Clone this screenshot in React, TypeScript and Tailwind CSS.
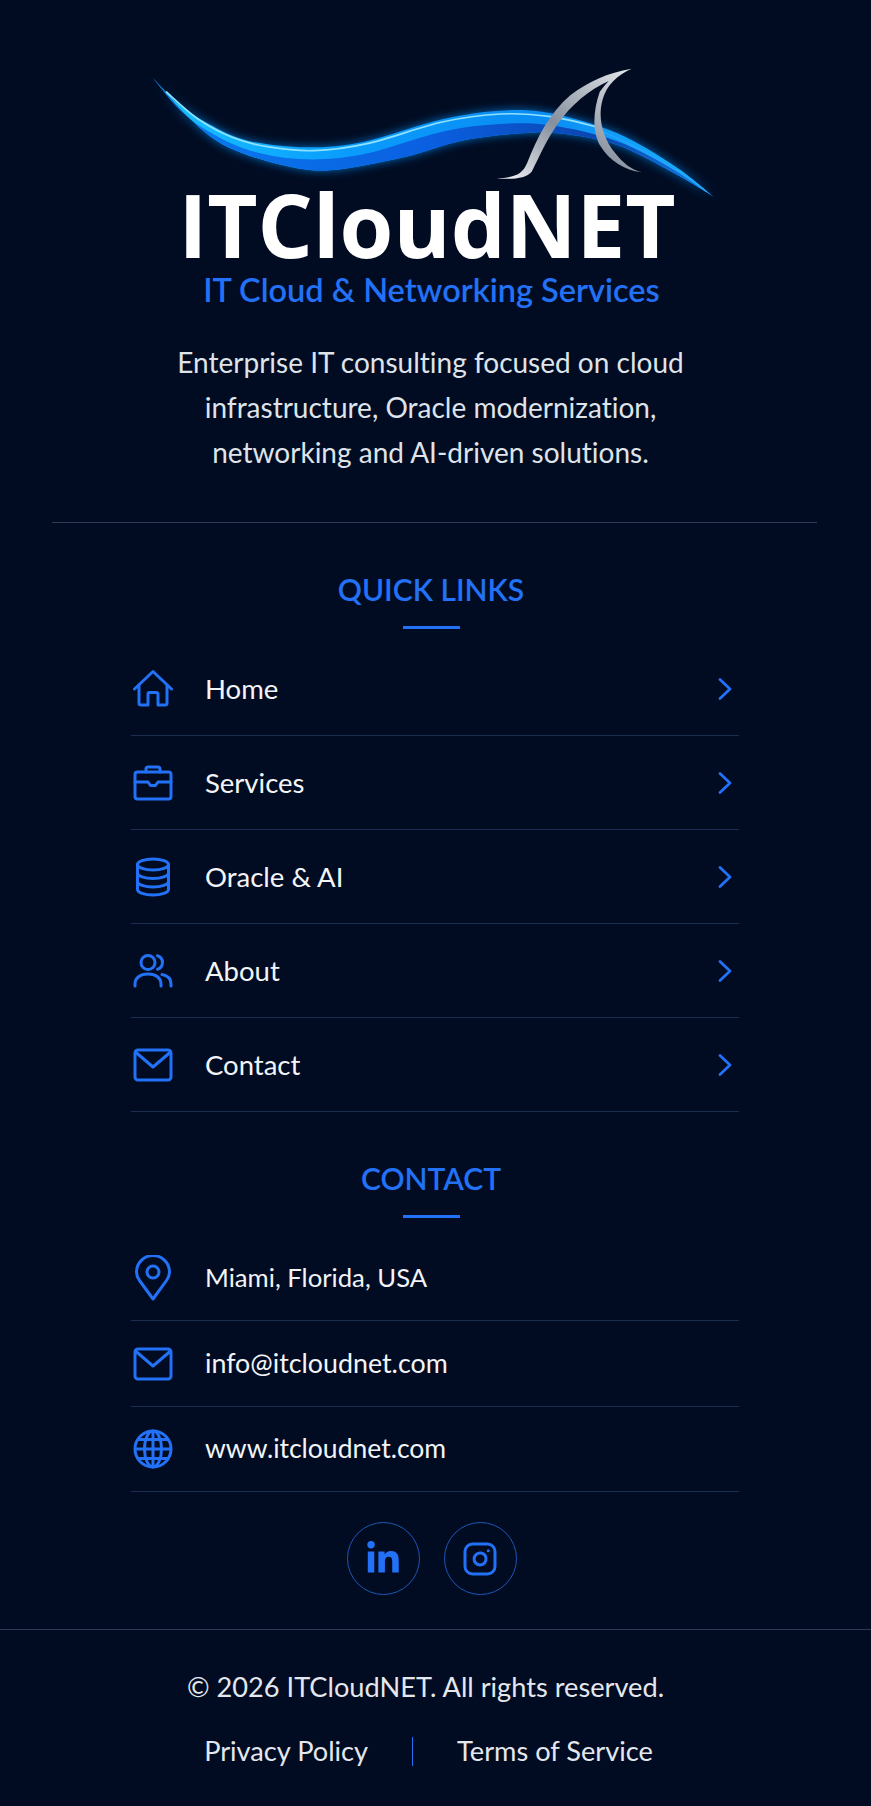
import { Instagram } from 'lucide-react'
import { FaLinkedinIn } from 'react-icons/fa'
import type { ReactNode } from 'react'

const SANS = "font-['Lato','Noto_Sans',sans-serif] [font-variant-ligatures:none]"

// turn a list of points into a smooth path segment (catmull-rom)
function smooth(pts: number[][]) {
  let d = ''
  for (let i = 0; i < pts.length - 1; i++) {
    const p0 = pts[Math.max(i - 1, 0)]
    const p1 = pts[i]
    const p2 = pts[i + 1]
    const p3 = pts[Math.min(i + 2, pts.length - 1)]
    const c1 = [p1[0] + (p2[0] - p0[0]) / 6, p1[1] + (p2[1] - p0[1]) / 6]
    const c2 = [p2[0] - (p3[0] - p1[0]) / 6, p2[1] - (p3[1] - p1[1]) / 6]
    d += `C${c1[0]} ${c1[1]} ${c2[0]} ${c2[1]} ${p2[0]} ${p2[1]}`
  }
  return d
}

const waveTop = [[52, 78], [120, 160], [200, 222], [300, 272], [450, 292], [600, 275], [800, 208], [950, 182], [1080, 190], [1250, 250], [1400, 350], [1498, 440]]
const waveMid = [[52, 78], [130, 185], [220, 258], [320, 306], [450, 328], [600, 312], [800, 245], [950, 222], [1080, 226], [1250, 274], [1400, 362], [1498, 440]]
const waveBottom = [[1498, 440], [1400, 372], [1250, 285], [1100, 250], [1000, 250], [850, 272], [700, 322], [520, 360], [400, 348], [250, 292], [150, 205], [52, 78]]
const waveLine = [[90, 125], [170, 205], [260, 262], [350, 290], [470, 302], [610, 280], [800, 216], [950, 192], [1080, 200], [1200, 232]]
const wavePath = `M52 78${smooth(waveTop)}${smooth(waveBottom)}Z`
const waveLower = `M52 78${smooth(waveMid)}${smooth(waveBottom)}Z`

function HomeIcon() {
  return (
    <svg width="40" height="40" viewBox="0 0 40 40" fill="none" stroke="currentColor" strokeWidth="3" strokeLinecap="round" strokeLinejoin="round">
      <path d="M1.500 20 20 2.500 38.500 20" />
      <path d="M6 16v18a2 2 0 0 0 2 2h7V25a1.500 1.500 0 0 1 1.500-1.500h7A1.500 1.500 0 0 1 25 25v11h7a2 2 0 0 0 2-2V16" />
    </svg>
  )
}

function BriefcaseIcon() {
  return (
    <svg width="40" height="40" viewBox="0 0 40 40" fill="none" stroke="currentColor" strokeWidth="3" strokeLinecap="round" strokeLinejoin="round">
      <rect x="2" y="9" width="36" height="27" rx="2.500" />
      <path d="M13 9V6a2 2 0 0 1 2-2h10a2 2 0 0 1 2 2v3" />
      <path d="M2 19h13l2.500 3.500h5l2.500-3.500h13" />
    </svg>
  )
}

function DatabaseIcon() {
  return (
    <svg width="40" height="40" viewBox="0 0 40 40" fill="none" stroke="currentColor" strokeWidth="3" strokeLinecap="round" strokeLinejoin="round">
      <ellipse cx="20" cy="7.500" rx="15.500" ry="5.500" />
      <path d="M4.500 7.500v25c0 3 7 5.500 15.500 5.500s15.500-2.500 15.500-5.500v-25" />
      <path d="M4.500 16c0 3 7 5.500 15.500 5.500S35.500 19 35.500 16" />
      <path d="M4.500 24.500c0 3 7 5.500 15.500 5.500s15.500-2.500 15.500-5.500" />
    </svg>
  )
}

function UsersIcon() {
  return (
    <svg width="40" height="40" viewBox="0 0 40 40" fill="none" stroke="currentColor" strokeWidth="3" strokeLinecap="round" strokeLinejoin="round">
      <circle cx="15" cy="11.500" r="7" />
      <path d="M2 35v-2c0-6 5-10 13-10s13 4 13 10v2" />
      <path d="M24.500 4.800a7 7 0 0 1 0 13.400" />
      <path d="M29 23.500c5.500 1 9 4.500 9 9.500v2" />
    </svg>
  )
}

function MailIcon() {
  return (
    <svg width="40" height="40" viewBox="0 0 40 40" fill="none" stroke="currentColor" strokeWidth="3" strokeLinecap="round" strokeLinejoin="round">
      <rect x="2" y="5" width="36" height="30" rx="3" />
      <path d="M3 7.500 20 22 37 7.500" />
    </svg>
  )
}

function PinIcon() {
  return (
    <svg width="40" height="46" viewBox="0 0 40 46" fill="none" stroke="currentColor" strokeWidth="3" strokeLinejoin="round">
      <path d="M20 44 6.500 25.500C4 22 3.500 19.500 3.500 17a16.500 16.500 0 0 1 33 0c0 2.500-.5 5-3 8.500Z" />
      <circle cx="20" cy="17" r="6" />
    </svg>
  )
}

function GlobeIcon() {
  return (
    <svg width="40" height="40" viewBox="0 0 40 40" fill="none" stroke="currentColor" strokeWidth="3">
      <circle cx="20" cy="20" r="18" />
      <ellipse cx="20" cy="20" rx="8.500" ry="18" />
      <path d="M20 2v36M2 20h36M5 10.500h30M5 29.500h30" />
    </svg>
  )
}

function Chevron() {
  return (
    <svg width="20" height="26" viewBox="0 0 20 26" fill="none" stroke="currentColor" strokeWidth="2.800" strokeLinecap="round" strokeLinejoin="round">
      <path d="M5 3.500 15 13 5 22.500" />
    </svg>
  )
}

function Logo() {
  return (
    <svg className="block mx-auto" width="610" height="150" viewBox="0 0 1568 450" preserveAspectRatio="none">
      <defs>
        <linearGradient id="wave" x1="0" y1="0" x2="1" y2="0">
          <stop offset="0" stopColor="#19c4ff" />
          <stop offset="0.35" stopColor="#0a9cfc" />
          <stop offset="0.7" stopColor="#0a8cf2" />
          <stop offset="1" stopColor="#1ab4ff" />
        </linearGradient>
        <linearGradient id="waveLow" x1="0" y1="0" x2="1" y2="0">
          <stop offset="0" stopColor="#0a7cf0" />
          <stop offset="0.5" stopColor="#0a5fe0" />
          <stop offset="0.8" stopColor="#0b45b0" />
          <stop offset="1" stopColor="#0f80ea" />
        </linearGradient>
        <linearGradient id="fin" x1="0" y1="1" x2="1" y2="0">
          <stop offset="0" stopColor="#f4f5f8" />
          <stop offset="0.45" stopColor="#868f9d" />
          <stop offset="1" stopColor="#eceef2" />
        </linearGradient>
        <filter id="glow" x="-10%" y="-40%" width="120%" height="180%">
          <feGaussianBlur stdDeviation="14" />
        </filter>
      </defs>
      <path d={wavePath} fill="#0b8cf5" filter="url(#glow)" opacity="0.75" />
      <path d={wavePath} fill="url(#wave)" />
      <path d={waveLower} fill="url(#waveLow)" />
      <path d={`M90 125${smooth(waveLine)}`} fill="none" stroke="#8fe2ff" strokeWidth="5" />
      <path d="M1200 240C1300 285 1400 355 1480 425" fill="none" stroke="#2aa5ff" strokeWidth="4" />
      <path
        d="M940 386C985 382 1005 375 1018 340C1045 260 1075 190 1130 135C1175 95 1225 68 1287 56C1250 75 1222 105 1212 150C1200 200 1210 260 1245 310C1265 340 1285 358 1312 367C1270 360 1230 335 1205 285C1188 250 1185 190 1205 125C1215 110 1222 100 1228 93C1180 118 1130 165 1095 225C1065 275 1050 320 1030 365C1015 385 985 388 940 386Z"
        fill="url(#fin)"
      />
    </svg>
  )
}

function SectionTitle({ children }: { children: ReactNode }) {
  return (
    <div className="flex flex-col items-center pr-[9px]">
      <h2 className="text-[30px] leading-[40px] font-semibold text-[#2271f6]">{children}</h2>
      <div className="mt-[17px] h-[3px] w-[57px] bg-[#2271f6]" />
    </div>
  )
}

function Row({ icon, label, height, size = 'text-[27.500px]', chevron }: { icon: ReactNode; label: string; height: string; size?: string; chevron?: boolean }) {
  return (
    <div className={`flex items-center border-b border-[#1b2d50] pr-[4px] ${height}`}>
      <div className="ml-[1px] flex w-[42px] justify-center text-[#2271f6]">{icon}</div>
      <span className={`ml-[31px] text-[#f2f4f8] ${size}`}>{label}</span>
      {chevron && <div className="ml-auto flex text-[#2271f6]"><Chevron /></div>}
    </div>
  )
}

const links: { label: string; icon: ReactNode }[] = [
  { label: 'Home', icon: <HomeIcon /> },
  { label: 'Services', icon: <BriefcaseIcon /> },
  { label: 'Oracle & AI', icon: <DatabaseIcon /> },
  { label: 'About', icon: <UsersIcon /> },
  { label: 'Contact', icon: <MailIcon /> },
]

export default function App() {
  return (
    <div className={`h-[1806px] overflow-hidden bg-[#010c22] pt-[50px] text-center ${SANS}`}>
      <Logo />
      <h1 className="-mt-[14px] pr-[17px] text-[87px] leading-[76px] font-bold text-white font-['Open_Sans',sans-serif]">ITCloudNET</h1>
      <p className="mt-[8px] pr-[8px] text-[32.500px] leading-[40px] font-semibold text-[#2271f6]">IT Cloud &amp; Networking Services</p>
      <p className="mt-[30px] pr-[10px] text-[28px] leading-[45px] text-[#dfe3ea]">
        Enterprise IT consulting focused on cloud
        <br />
        infrastructure, Oracle modernization,
        <br />
        networking and AI-driven solutions.
      </p>

      <div className="ml-[52px] mr-[54px] mt-[47px] border-t border-[#2a3a58]" />

      <div className="mt-[46px]">
        <SectionTitle>QUICK LINKS</SectionTitle>
      </div>
      <div className="ml-[131px] mr-[132px] mt-[13px] text-left">
        {links.map((l) => (
          <Row key={l.label} icon={l.icon} label={l.label} height="h-[94px]" chevron />
        ))}
      </div>

      <div className="mt-[46px]">
        <SectionTitle>CONTACT</SectionTitle>
      </div>
      <div className="ml-[131px] mr-[132px] mt-[17px] text-left">
        <Row icon={<PinIcon />} label="Miami, Florida, USA" height="h-[86px]" size="text-[25.700px]" />
        <Row icon={<MailIcon />} label="info@itcloudnet.com" height="h-[86px]" size="text-[26.800px]" />
        <Row icon={<GlobeIcon />} label="www.itcloudnet.com" height="h-[85px]" size="text-[26.500px]" />
      </div>

      <div className="mt-[30px] flex justify-center gap-[24px] pr-[8px] text-[#2271f6]">
        <div className="flex h-[73px] w-[73px] items-center justify-center rounded-full border border-[#1d56b5]">
          <FaLinkedinIn size={36} />
        </div>
        <div className="flex h-[73px] w-[73px] items-center justify-center rounded-full border border-[#1d56b5]">
          <Instagram size={36} strokeWidth={2} />
        </div>
      </div>

      <div className="mt-[34px] border-t border-[#2a3a58]" />
      <p className="mt-[37px] pr-[20px] text-[27.200px] leading-[40px] text-[#e4e7ed]">© 2026 ITCloudNET. All rights reserved.</p>
      <div className="mt-[24px] flex items-center justify-center pr-[14px] text-[27.200px] leading-[40px] text-[#e4e7ed]">
        <span>Privacy Policy</span>
        <div className="mx-[44px] h-[29px] w-[1px] bg-[#2271f6]" />
        <span>Terms of Service</span>
      </div>
    </div>
  )
}
